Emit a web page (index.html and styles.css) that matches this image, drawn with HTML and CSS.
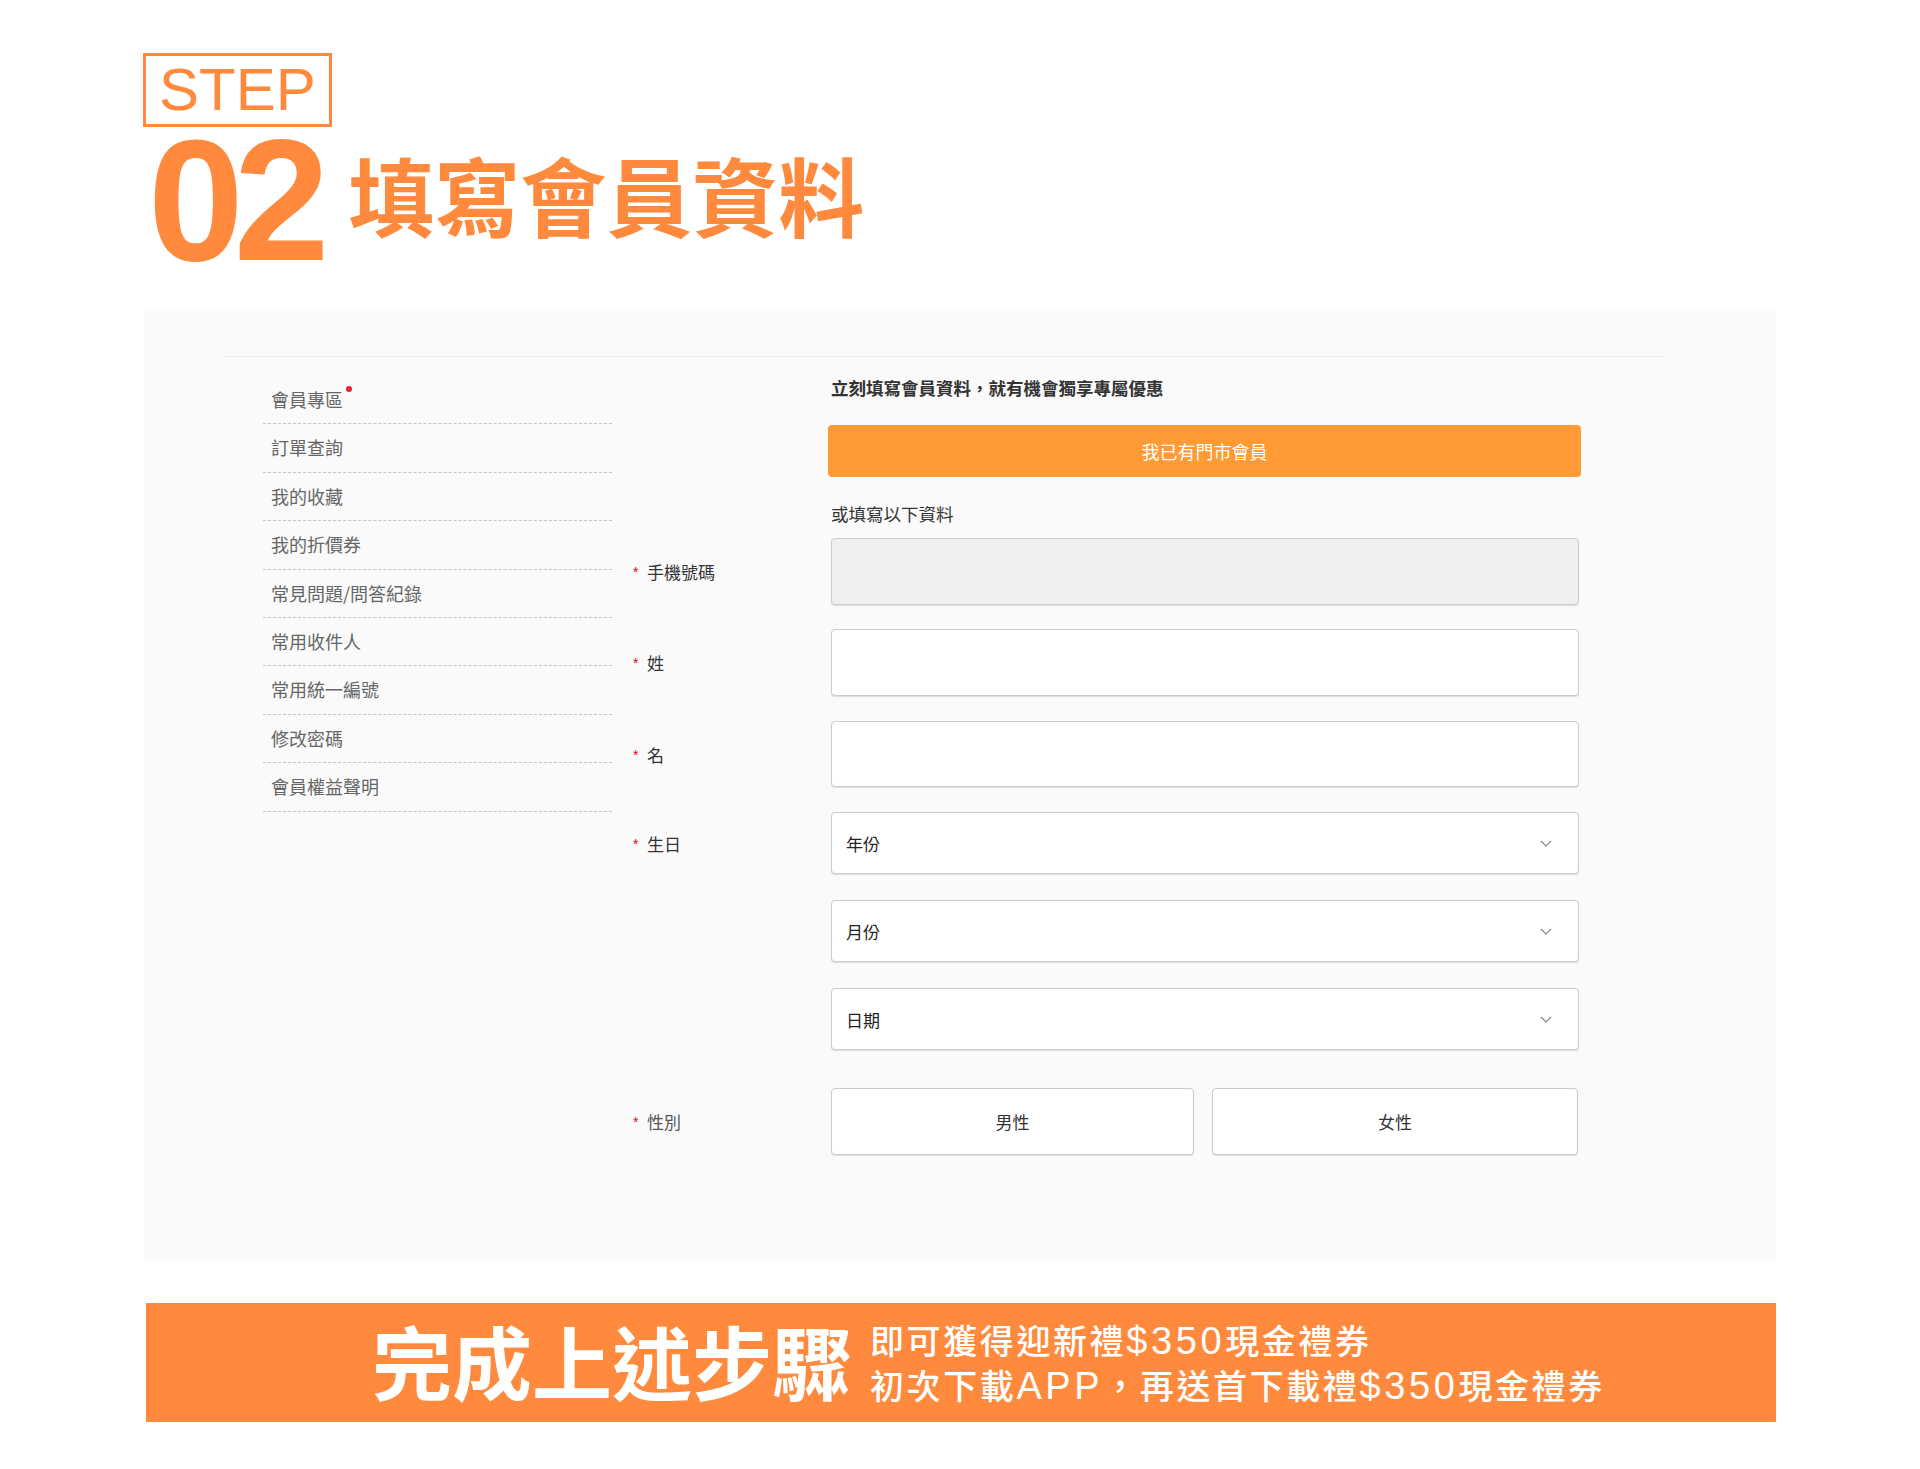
FILE: index.html
```html
<!DOCTYPE html>
<html lang="zh-Hant">
<head>
<meta charset="utf-8">
<title>STEP 02 填寫會員資料</title>
<link rel="stylesheet" href="styles.css">
</head>
<body>
<header class="hero">
  <div class="step">STEP</div>
  <div class="hero-row">
    <span class="num">02</span>
    <h1 class="title">填寫會員資料</h1>
  </div>
</header>

<section class="panel">
  <div class="topline"></div>
  <div class="content">
    <nav class="sidebar">
      <a class="nav-item">會員專區<span class="dot"></span></a>
      <a class="nav-item">訂單查詢</a>
      <a class="nav-item">我的收藏</a>
      <a class="nav-item">我的折價券</a>
      <a class="nav-item">常見問題/問答紀錄</a>
      <a class="nav-item">常用收件人</a>
      <a class="nav-item">常用統一編號</a>
      <a class="nav-item">修改密碼</a>
      <a class="nav-item">會員權益聲明</a>
    </nav>

    <div class="form">
      <p class="lead">立刻填寫會員資料，就有機會獨享專屬優惠</p>
      <div class="store-btn">我已有門市會員</div>
      <p class="or-text">或填寫以下資料</p>

      <div class="row row-phone">
        <div class="label"><span class="req">*</span>手機號碼</div>
        <div class="field"><div class="input disabled"></div></div>
      </div>
      <div class="row row-last">
        <div class="label"><span class="req">*</span>姓</div>
        <div class="field"><div class="input"></div></div>
      </div>
      <div class="row row-first">
        <div class="label"><span class="req">*</span>名</div>
        <div class="field"><div class="input short"></div></div>
      </div>
      <div class="row row-year">
        <div class="label"><span class="req">*</span>生日</div>
        <div class="field">
          <div class="input select"><span>年份</span><svg class="chev" width="12" height="7" viewBox="0 0 12 7"><polyline points="1,1 6,6 11,1" fill="none" stroke="#888" stroke-width="1.2"/></svg></div>
        </div>
      </div>
      <div class="row row-sel">
        <div class="label"></div>
        <div class="field">
          <div class="input select"><span>月份</span><svg class="chev" width="12" height="7" viewBox="0 0 12 7"><polyline points="1,1 6,6 11,1" fill="none" stroke="#888" stroke-width="1.2"/></svg></div>
        </div>
      </div>
      <div class="row row-sel">
        <div class="label"></div>
        <div class="field">
          <div class="input select"><span>日期</span><svg class="chev" width="12" height="7" viewBox="0 0 12 7"><polyline points="1,1 6,6 11,1" fill="none" stroke="#888" stroke-width="1.2"/></svg></div>
        </div>
      </div>
      <div class="row row-gender">
        <div class="label label-light"><span class="req">*</span>性別</div>
        <div class="field gender">
          <div class="input choice">男性</div>
          <div class="input choice">女性</div>
        </div>
      </div>
    </div>
  </div>
</section>

<section class="banner">
  <div class="banner-big">完成上述步驟</div>
  <div class="banner-sub">
    <div>即可獲得迎新禮<span class="latin">$350</span>現金禮券</div>
    <div>初次下載<span class="latin">APP</span>，再送首下載禮<span class="latin">$350</span>現金禮券</div>
  </div>
</section>
</body>
</html>
```

FILE: styles.css
```css
* { box-sizing: border-box; }

body {
  margin: 0;
  background: #ffffff;
  font-family: "Noto Sans CJK TC", "Noto Sans CJK SC", sans-serif;
  color: #333;
}

/* ---------- hero ---------- */
.hero {
  padding: 53px 0 0 143px;
}

.step {
  display: inline-block;
  border: 3px solid #ff8a3d;
  color: #ff8a3d;
  font-family: "Liberation Sans", Arial, sans-serif;
  font-size: 60px;
  line-height: 68px;
  padding: 0 13px;
}

.hero-row {
  display: flex;
  align-items: center;
  margin-top: 8px;
}

.num {
  font-family: "Liberation Sans", Arial, sans-serif;
  font-weight: 700;
  font-size: 172px;
  line-height: 130px;
  letter-spacing: -10px;
  color: #ff8a3d;
  margin-left: 5px;
}

.title {
  margin: 0 0 12px 29px;
  font-size: 86px;
  line-height: 86px;
  font-weight: 700;
  color: #ff8a3d;
}

/* ---------- panel ---------- */
.panel {
  margin: 44px 0 0 144px;
  width: 1632px;
  height: 952px;
  background: #fafafa;
  padding-top: 47px;
}

.topline {
  margin: 0 111px 0 80px;
  height: 1px;
  background: #efefef;
}

.content {
  display: flex;
  align-items: flex-start;
  padding: 19px 0 0 119px;
}

.sidebar {
  width: 349px;
}

.nav-item {
  display: block;
  height: 48.4px;
  line-height: 47px;
  padding-left: 8px;
  border-bottom: 1px dashed #c4c4c4;
  font-size: 18px;
  color: #666;
}

.dot {
  display: inline-block;
  width: 6px;
  height: 6px;
  border-radius: 50%;
  background: #e8262d;
  vertical-align: top;
  margin: 10px 0 0 3px;
}

.form {
  margin-left: 21px;
  width: 946px;
}

.lead {
  margin: 0 0 0 198px;
  font-size: 17.5px;
  line-height: 24px;
  font-weight: 700;
  color: #333;
}

.store-btn {
  margin: 25px 0 0 195px;
  width: 753px;
  height: 52px;
  background: #ff9a35;
  border-radius: 4px;
  color: #fff;
  font-size: 18px;
  display: flex;
  align-items: center;
  justify-content: center;
}

.or-text {
  margin: 25px 0 0 198px;
  font-size: 17.5px;
  line-height: 24px;
  color: #333;
}

.row {
  display: flex;
  align-items: center;
}

.row-phone { margin-top: 12px; }
.row-last { margin-top: 24px; }
.row-first { margin-top: 25px; }
.row-year { margin-top: 25px; }
.row-sel { margin-top: 26px; }
.row-gender { margin-top: 38px; }

.label {
  width: 198px;
  font-size: 17px;
  color: #333;
}

.label-light { color: #555; }

.req {
  display: inline-block;
  width: 14px;
  color: #e60012;
  font-family: "Liberation Sans", Arial, sans-serif;
  font-size: 14px;
  vertical-align: 2px;
}

.field {
  width: 748px;
}

.input {
  height: 67px;
  border: 1px solid #cccccc;
  border-radius: 4px;
  background: #ffffff;
  box-shadow: 0 1px 1px rgba(0, 0, 0, 0.12);
}

.input.short { height: 66px; }

.input.disabled {
  background: #efefef;
}

.select {
  height: 62px;
  display: flex;
  align-items: center;
  justify-content: space-between;
  padding: 0 26px 0 14px;
  font-size: 17px;
  color: #222;
}

.gender {
  display: grid;
  grid-template-columns: 363px 366px;
  column-gap: 18px;
}

.choice {
  display: flex;
  align-items: center;
  justify-content: center;
  font-size: 17px;
  color: #333;
}

/* ---------- banner ---------- */
.banner {
  margin: 42px 0 0 146px;
  width: 1630px;
  height: 119px;
  background: #ff8a3d;
  display: flex;
  align-items: center;
  padding-left: 226px;
  color: #ffffff;
}

.banner-big {
  font-size: 80px;
  line-height: 1;
  font-weight: 700;
  margin-bottom: 8px;
}

.banner-sub {
  margin-left: 18px;
  font-size: 34px;
  line-height: 43px;
  letter-spacing: 2.6px;
  font-weight: 500;
}

.latin {
  font-family: "Liberation Sans", Arial, sans-serif;
  font-weight: 400;
  font-size: 38px;
  letter-spacing: 3.6px;
}
```
